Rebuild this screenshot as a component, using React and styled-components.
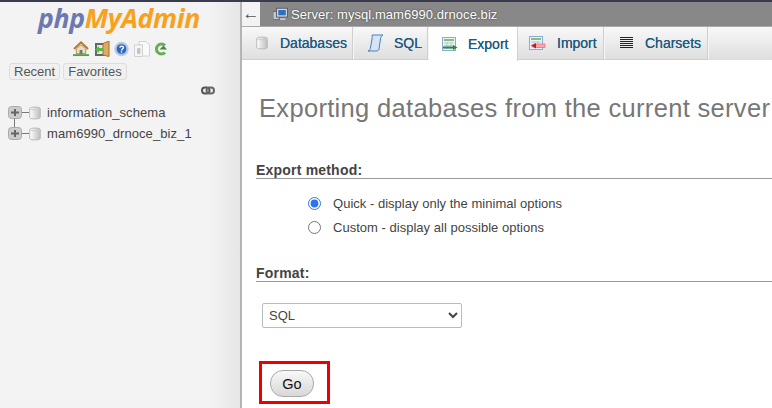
import React from "react";
import styled, { createGlobalStyle } from "styled-components";

const Global = createGlobalStyle`
  html, body { margin: 0; padding: 0; background: #fff; }
  body { font-family: "Liberation Sans", sans-serif; overflow: hidden; }
  #root { width: 772px; height: 408px; overflow: hidden; }
`;

const Page = styled.div`
  width: 772px; height: 408px; display: flex; flex-direction: column; overflow: hidden;
`;
const TopStrip = styled.div`height: 2px; background: #3a3b4c; flex: none;`;
const Body = styled.div`flex: 1; display: flex; min-height: 0;`;

const Sidebar = styled.aside`
  width: 240px; flex: none; display: flex; flex-direction: column;
  background: linear-gradient(to right, #f3f3f3 0, #f3f3f3 210px, #e6e6e6 240px);
  color: #444;
`;
const LogoWrap = styled.div`
  height: 31px; padding: 2px 0 0 38px; box-sizing: border-box; display: flex; align-items: center;
`;
const Logo = styled.div`
  font: italic 700 26.6px/31px "Open Sans", "Liberation Sans", sans-serif;
  letter-spacing: -0.35px; color: #6c78af; white-space: nowrap;
  span { color: #f9a11b; }
`;
const IconRow = styled.div`
  height: 16px; margin-top: 8px; padding-left: 73px; display: flex; gap: 4.5px; align-items: center;
`;
const TabLinks = styled.div`
  display: flex; gap: 3px; padding-left: 9px; margin-top: 6px;
`;
const NavLink = styled.div`
  height: 15px; padding: 0 4px; line-height: 15px; font-size: 13px; color: #555;
  border: 1px solid #ddd; border-radius: 3px; background: #f0f0f0;
`;
const LinkIconRow = styled.div`
  display: flex; justify-content: flex-end; padding-right: 25px; margin-top: 6px; height: 9px;
`;
const Tree = styled.div`margin-top: 11px; padding-left: 8px; display: flex; flex-direction: column; gap: 8px;`;
const TreeRow = styled.div`
  height: 13px; display: flex; align-items: center; font-size: 13px; color: #444;
  svg { flex: none; }
`;
const TreeLabel = styled.span`margin-left: 6px; white-space: nowrap; letter-spacing: 0.08px;`;

const Divider = styled.div`width: 2px; flex: none; background: #b4b4b4;`;

const Main = styled.main`flex: 1; min-width: 0; display: flex; flex-direction: column; background: #fff;`;
const ServerBar = styled.div`
  height: 24px; flex: none; display: flex; align-items: center; background: #888;
  color: #fff; font: 13px "Liberation Sans", sans-serif;
`;
const BackButton = styled.div`
  width: 18px; height: 24px; background: #f3f3f3; color: #555; display: flex; align-items: center; justify-content: center;
  font: 17px "Liberation Sans", sans-serif; flex: none;
`;
const ServerTitle = styled.div`
  display: flex; align-items: center; gap: 3px; margin-left: 13px; letter-spacing: 0.06px; white-space: nowrap;
  text-shadow: 0 0 2px #333;
`;
const TabBar = styled.nav`
  height: 33px; flex: none; display: flex; border-top: 1px solid #aaa;
  background: linear-gradient(#f8f8f8, #dedede);
`;
const Tab = styled.div`
  width: ${p => p.$w}px; box-sizing: border-box; flex: none; display: flex; align-items: center; padding-left: ${p => p.$pad}px;
  font: 400 14px "Liberation Sans", sans-serif; color: #235a81; text-shadow: 0 0 0.6px #235a81;
  border-right: 1px solid #f6f6f6; box-shadow: inset -1px 0 0 #cfcfcf;
  background: ${p => (p.$active ? "#fff" : "transparent")};
  ${p => p.$active && "box-shadow: none; border-right: 1px solid #d2d2d2; height: 34px;"}
  border-bottom: ${p => (p.$active ? "none" : "1px solid #cfcfcf")};
  svg { flex: none; }
`;
const TabText = styled.span`margin-left: ${p => p.$m}px;`;
const Content = styled.div`
  padding: 0 0 0 14px; color: #444;
`;
const Heading = styled.h2`
  margin: 33px 0 0 3px; font: 400 25.5px/30px "Liberation Sans", sans-serif; color: #777; white-space: nowrap; letter-spacing: 0.32px;
`;
const SectionTitle = styled.h3`
  margin: ${p => p.$top}px 0 0; font: 700 14px/16px "Liberation Sans", sans-serif; color: #444;
  border-bottom: 1px solid #999; letter-spacing: 0.2px;
`;
const Options = styled.div`margin: 17px 0 0 52px; display: flex; flex-direction: column; gap: 9px;`;
const Option = styled.label`
  display: flex; align-items: center; height: 15px; font-size: 13px; letter-spacing: 0.02px; color: #444;
  input { margin: 0 12px 0 0; width: 13px; height: 13px; accent-color: #2d74f0; }
`;
const Select = styled.select`
  display: block; margin: 21px 0 0 6px; width: 200px; height: 25px; box-sizing: border-box; padding: 0 2px;
  background: #fff; border: 1px solid #bbb; border-radius: 2px; color: #444; font: 13px "Liberation Sans", sans-serif;
`;
const Highlight = styled.div`
  margin: 33px 0 0 3px; width: 71px; height: 43px; box-sizing: border-box; border: 3px solid #ee0000;
  padding: 6px 0 0 8px;
`;
const GoButton = styled.button`
  display: block; width: 44px; height: 27px; border: 1px solid #aaa; border-radius: 13px; padding: 0; color: #111;
  background: linear-gradient(#f8f8f8, #d8d8d8); font: 14.5px "Liberation Sans", sans-serif;
`;

const Home = () => (
  <svg width="16" height="16" viewBox="0 0 17 16">
    <path d="M1 8 8.5 1 16 8" fill="none" stroke="#b5782a" strokeWidth="2" />
    <path d="M3.5 8 8.5 3.5 13.5 8v5h-10z" fill="#eadfc6" stroke="#a98a55" />
    <rect x="7" y="9" width="3" height="4.5" fill="#777" />
    <path d="M0 14.5h17" stroke="#5a9e3a" strokeWidth="2" />
  </svg>
);
const Exit = () => (
  <svg width="16" height="16" viewBox="0 0 16 16">
    <rect x="1" y="2" width="9" height="13" fill="#666" />
    <rect x="3" y="4" width="6" height="9" fill="#e8e8e8" />
    <path d="M9 2.500 15 0v15.500l-6-1.500z" fill="#e0aa62" stroke="#a8702c" />
    <path d="M1 8.500 5 5v2h4v3H5v2z" fill="#5cb545" />
  </svg>
);
const Help = () => (
  <svg width="15" height="16" viewBox="0 0 15 16">
    <circle cx="7.500" cy="8" r="6.700" fill="#a9c4ea" stroke="#b7cbe9" />
    <circle cx="7.500" cy="8" r="4.800" fill="#2f68b8" />
    <path d="M5.800 6.600c.3-2 3.600-2 3.600 0 0 1.400-1.900 1.400-1.900 2.800" fill="none" stroke="#fff" strokeWidth="1.400" />
    <rect x="6.800" y="10.200" width="1.400" height="1.400" fill="#fff" />
  </svg>
);
const Doc = () => (
  <svg width="16" height="16" viewBox="0 0 16 16">
    <path d="M5 .5h7l3.500 3.500v11H8V4H5z" fill="#fafafa" stroke="#d2d2d2" />
    <rect x=".5" y="4" width="8" height="11.500" fill="#f6f6f6" stroke="#d2d2d2" />
    <rect x="3" y="7" width="3.500" height="6" rx="1" fill="#c4c4c4" />
  </svg>
);
const Reload = () => (
  <svg width="13" height="16" viewBox="0 0 13 16">
    <path d="M11 4.500A5 5 0 1 0 11 11.500" fill="none" stroke="#68ad58" strokeWidth="3" />
    <path d="M5.500 8.500H13L9.500 4.500z" fill="#3f8f33" />
  </svg>
);
const Chain = () => (
  <svg width="14" height="9" viewBox="0 0 14 9">
    <rect x="1" y="1.500" width="7.500" height="6" rx="3" fill="none" stroke="#555" strokeWidth="2" />
    <rect x="5.500" y="1.500" width="7.500" height="6" rx="3" fill="none" stroke="#666" strokeWidth="2" />
  </svg>
);
const Plus = ({ tail }) => (
  <svg width="14" height="13" viewBox="0 0 14 13" style={{ overflow: "visible" }}>
    {tail && <path d="M6.500 -8V1" stroke="#777" />}
    <rect x="0.500" y="0.500" width="13" height="12" rx="3" fill="#ccc" stroke="#aaa" />
    <path d="M3 6.500h8M7 3v7" stroke="#666" strokeWidth="2" />
  </svg>
);
const Connector = () => (
  <svg width="7" height="13" viewBox="0 0 7 13"><path d="M0 6.500h7" stroke="#777" /></svg>
);
const Cyl = ({ w = 12, h = 14 }) => (
  <svg width={w} height={h} viewBox="0 0 12 14">
    <defs>
      <linearGradient id="cy" x1="0" x2="1" y1="0" y2="0">
        <stop offset="0" stopColor="#fff" />
        <stop offset="1" stopColor="#bdbdbd" />
      </linearGradient>
    </defs>
    <path d="M.7 2.500C.7.600 11.300.600 11.300 2.500v9c0 1.900-10.600 1.900-10.600 0z" fill="url(#cy)" stroke="#bbb" />
    <path d="M.7 2.500c0 1.700 10.600 1.700 10.600 0" fill="none" stroke="#ccc" />
  </svg>
);
const Monitor = () => (
  <svg width="15" height="16" viewBox="0 0 17 16">
    <rect x="0" y="5" width="7" height="9.500" fill="#c4c7cb" stroke="#5e6066" />
    <rect x="4" y="1.500" width="12.500" height="10" fill="#cfd4da" stroke="#556" />
    <rect x="6" y="3.500" width="8.500" height="6" fill="#2f6fc0" />
    <path d="M8 13h6v1.500H8z" fill="#ddd" />
  </svg>
);
const Scroll = () => (
  <svg width="17" height="18" viewBox="0 0 17 18">
    <path d="M5 1h11c-2 1-2 2-2.500 4L12 15c-.3 1.500-1.500 2-3 2H1c1.500 0 2-1 2.300-2.500L5 5c.3-2 0-3 0-4z" fill="#d6e4f6" stroke="#4a7fc0" />
  </svg>
);
const TableIcon = ({ arrow, top }) => (
  <svg width="16" height="14" viewBox="0 0 16 14" style={{ overflow: "visible" }}>
    <rect x="0.500" y="0.500" width="13" height="13" fill="#eef2fa" stroke="#8aa8d8" />
    <rect x="2" y="2" width="10" height="2" fill={top} />
    <path d="M2 6h10M2 8.500h10M2 11h10M5 5v7M9 5v7" stroke="#b9c7e0" />
    {arrow === "right"
      ? <path d="M1 9.500h10V8l4.500 2.500L11 13v-1.500H1z" fill="#2b8a2b" />
      : <g><rect x="6" y="8" width="10" height="3.500" fill="#f7a9a9" stroke="#ee5555" strokeWidth=".6" /><path d="M2 9.700 7 7v5.400z" fill="#e01010" /></g>}
  </svg>
);
const Lines = () => (
  <svg width="13" height="12" viewBox="0 0 13 12">
    {[0.5, 2.5, 4.5, 6.5, 8.5, 10.5].map(y => <path key={y} d={`M0 ${y}h13`} stroke="#222" />)}
  </svg>
);

export default function App() {
  return (
    <Page>
      <Global />
      <TopStrip />
      <Body>
        <Sidebar>
          <LogoWrap><Logo>php<span>MyAdmin</span></Logo></LogoWrap>
          <IconRow><Home /><Exit /><Help /><Doc /><Reload /></IconRow>
          <TabLinks><NavLink>Recent</NavLink><NavLink>Favorites</NavLink></TabLinks>
          <LinkIconRow><Chain /></LinkIconRow>
          <Tree>
            <TreeRow><Plus /><Connector /><Cyl /><TreeLabel>information_schema</TreeLabel></TreeRow>
            <TreeRow><Plus tail /><Connector /><Cyl /><TreeLabel>mam6990_drnoce_biz_1</TreeLabel></TreeRow>
          </Tree>
        </Sidebar>
        <Divider />
        <Main>
          <ServerBar>
            <BackButton>←</BackButton>
            <ServerTitle><Monitor />Server: mysql.mam6990.drnoce.biz</ServerTitle>
          </ServerBar>
          <TabBar>
            <Tab $w={112} $pad={14}><Cyl /><TabText $m={12}>Databases</TabText></Tab>
            <Tab $w={75} $pad={13}><Scroll /><TabText $m={10}>SQL</TabText></Tab>
            <Tab $w={89} $pad={13} $active><TableIcon arrow="right" top="#7fc36a" /><TabText $m={10}>Export</TabText></Tab>
            <Tab $w={87} $pad={11}><TableIcon arrow="left" top="#7fc36a" /><TabText $m={12}>Import</TabText></Tab>
            <Tab $w={104} $pad={15}><Lines /><TabText $m={12}>Charsets</TabText></Tab>
          </TabBar>
          <Content>
            <Heading>Exporting databases from the current server</Heading>
            <SectionTitle $top={39}>Export method:</SectionTitle>
            <Options>
              <Option><input type="radio" name="m" defaultChecked />Quick - display only the minimal options</Option>
              <Option><input type="radio" name="m" />Custom - display all possible options</Option>
            </Options>
            <SectionTitle $top={30}>Format:</SectionTitle>
            <Select defaultValue="SQL"><option>SQL</option></Select>
            <Highlight><GoButton>Go</GoButton></Highlight>
          </Content>
        </Main>
      </Body>
    </Page>
  );
}
